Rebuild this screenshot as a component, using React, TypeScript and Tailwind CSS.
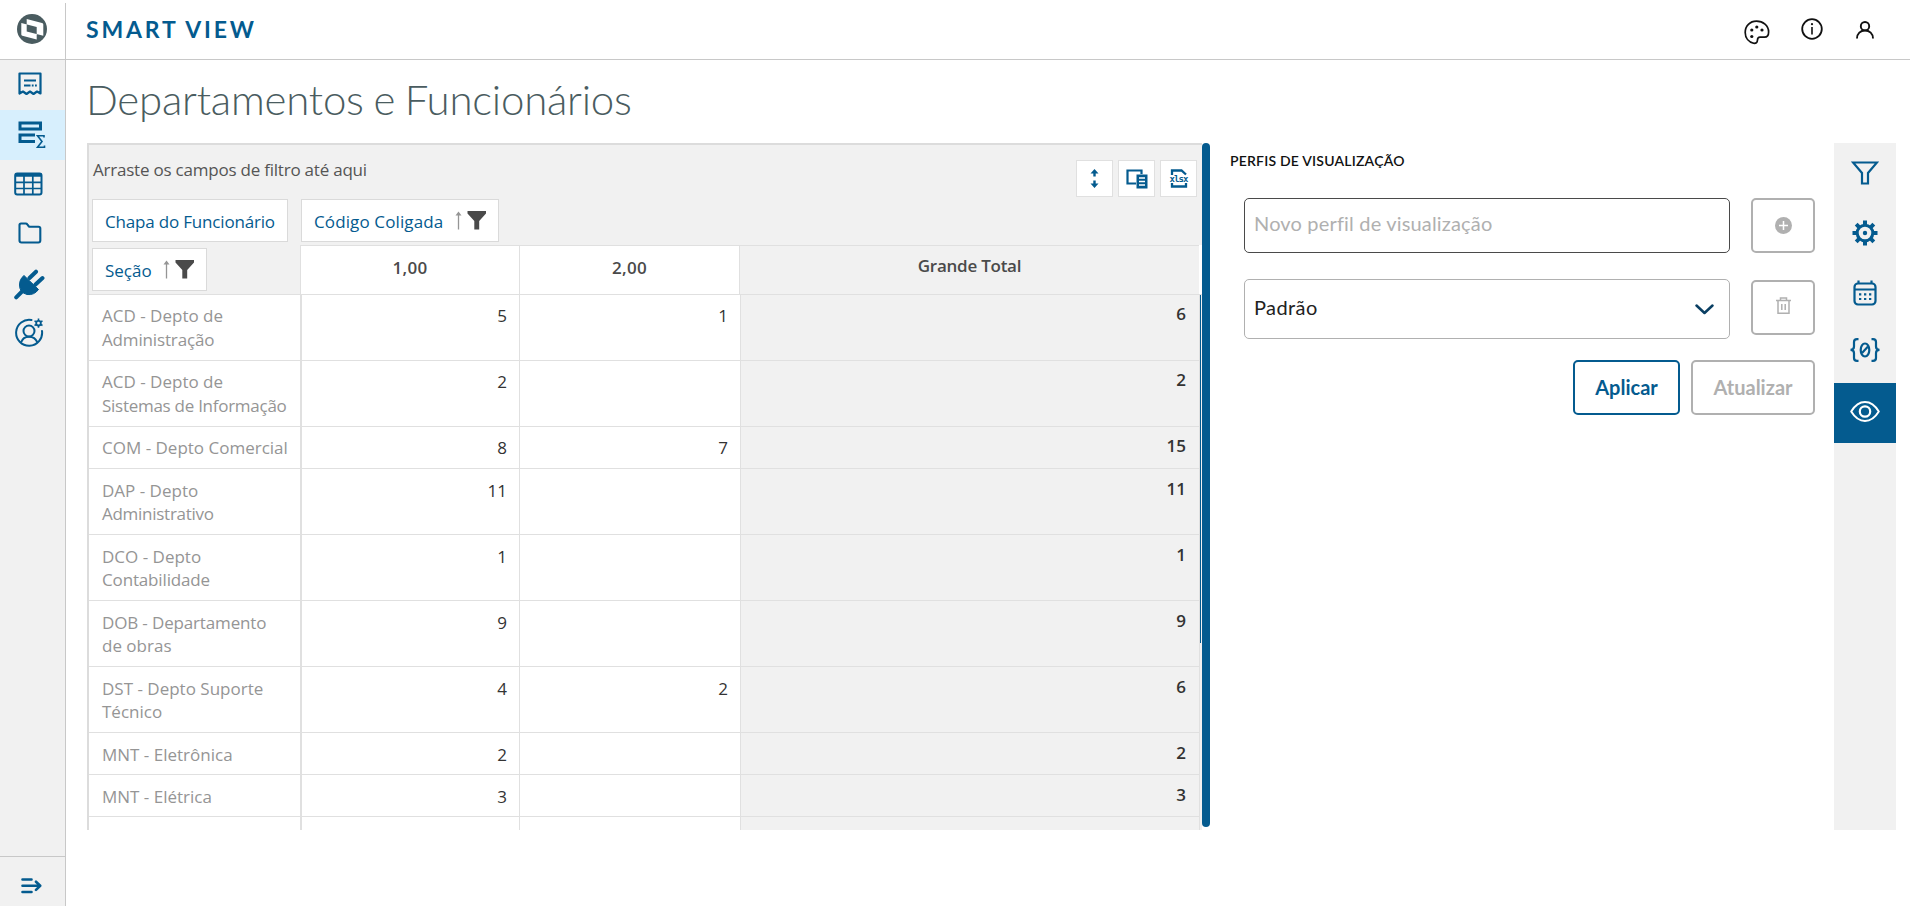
import React from 'react'

const BLUE = '#045b8f'

const rows: { name: string[]; a: string; b: string; total: string }[] = [
  { name: ['ACD - Depto de', 'Administração'], a: '5', b: '1', total: '6' },
  { name: ['ACD - Depto de', 'Sistemas de Informação'], a: '2', b: '', total: '2' },
  { name: ['COM - Depto Comercial'], a: '8', b: '7', total: '15' },
  { name: ['DAP - Depto', 'Administrativo'], a: '11', b: '', total: '11' },
  { name: ['DCO - Depto', 'Contabilidade'], a: '1', b: '', total: '1' },
  { name: ['DOB - Departamento', 'de obras'], a: '9', b: '', total: '9' },
  { name: ['DST - Depto Suporte', 'Técnico'], a: '4', b: '2', total: '6' },
  { name: ['MNT - Eletrônica'], a: '2', b: '', total: '2' },
  { name: ['MNT - Elétrica'], a: '3', b: '', total: '3' },
  { name: [''], a: '', b: '', total: '' },
]

function Logo() {
  return (
    <svg width="30" height="30" viewBox="0 0 30 30">
      <circle cx="15" cy="15" r="15" fill="#4a5c60" />
      <path
        d="M9.700 4.900 L25 8.900 Q26.300 9.300 26.300 10.500 V21.800 L9.700 17.400 Z M4.300 9 L19.700 13.100 V25.600 L5.300 21.800 Q4.300 21.500 4.300 20.500 Z"
        fill="#fff"
        fillRule="evenodd"
      />
    </svg>
  )
}

function ReportIcon() {
  return (
    <svg width="24" height="24" viewBox="0 0 24 24" fill="none" stroke={BLUE} strokeWidth="2.200">
      <path d="M1.500 21.500 V1.500 H22.500 V21.500 L19 19.500 L15.500 22 L12 19.500 L8.500 22 L5 19.500 Z" strokeLinejoin="round" />
      <path d="M6 8.500 H18 M6 13.500 H12.500 M13.800 13.500 H15.600 M17 13.500 H18.800" />
    </svg>
  )
}

function SumIcon() {
  return (
    <svg width="28" height="28" viewBox="0 0 28 28" fill="none" stroke={BLUE}>
      <path d="M2 2 H22.500 V8 H2 Z" strokeWidth="3" />
      <path d="M17 14 H2 V20.500 H17" strokeWidth="3" />
      <path d="M26 16.500 V14.700 H19.500 L24 20.500 L19.500 26.300 H26.500 V24.500" strokeWidth="1.600" />
    </svg>
  )
}

function TableIcon() {
  return (
    <svg width="29" height="24" viewBox="0 0 29 24" fill="none" stroke={BLUE}>
      <rect x="1.200" y="1.500" width="26.300" height="21" rx="2" strokeWidth="2" />
      <path d="M1 3 H27.500" strokeWidth="3.500" />
      <path d="M1 10.300 H27.500 M1 16.500 H27.500 M10 3 V22 M18.800 3 V22" strokeWidth="1.700" />
    </svg>
  )
}

function FolderIcon() {
  return (
    <svg width="24" height="22" viewBox="0 0 24 22" fill="none" stroke={BLUE} strokeWidth="2.100" strokeLinejoin="round">
      <path d="M1.500 3 Q1.500 1.500 3 1.500 H7.700 Q8.700 1.500 9.300 2.400 L11 4.700 H20.500 Q22.300 4.700 22.300 6.500 V18.500 Q22.300 20.500 20.300 20.500 H3.500 Q1.500 20.500 1.500 18.500 Z" />
    </svg>
  )
}

function PlugIcon() {
  return (
    <svg width="31" height="31" viewBox="0 0 31 31">
      <path d="M2.200 28.300 L9 21.500 M15.500 9 L22 2.700 M21.500 15.500 L28.500 9" stroke={BLUE} strokeWidth="4" strokeLinecap="round" />
      <path d="M10 6.500 L24.500 20.500 Q20 26.500 13 25.500 Q5.500 23.500 5.500 16 Q5.500 10 10 6.500 Z" fill={BLUE} stroke={BLUE} strokeLinejoin="round" />
    </svg>
  )
}

function UserGearIcon() {
  return (
    <svg width="29" height="29" viewBox="0 0 29 29" fill="none" stroke={BLUE} strokeWidth="2">
      <path d="M16.500 2 A13 13 0 1 0 27 13" strokeLinecap="round" />
      <circle cx="14" cy="13" r="5.500" />
      <path d="M6 24.500 Q8 18.700 14 18.700 Q20 18.700 22.500 24.500" />
      <circle cx="23.500" cy="5.200" r="2.300" strokeWidth="1.800" />
      <path d="M23.500 .6 V3 M23.500 7.500 V9.800 M19.500 2.900 L21.500 4 M25.500 6.400 L27.500 7.500 M19.500 7.500 L21.500 6.400 M25.500 4 L27.500 2.900" strokeWidth="1.600" />
    </svg>
  )
}

function ExpandIcon() {
  return (
    <svg width="21" height="16" viewBox="0 0 21 16" fill="none" stroke={BLUE} strokeWidth="2.600" strokeLinecap="round" strokeLinejoin="round">
      <path d="M1.500 1.500 H10.500 M1.500 14 H10.500 M1.500 7.800 H19 M15 3.700 L19.200 7.800 L15 11.900" />
    </svg>
  )
}

function PaletteIcon() {
  return (
    <svg width="26" height="25" viewBox="0 0 26 25" fill="none" stroke="#111" strokeWidth="1.700">
      <path d="M12.500 1.200 C19 1.200 24.600 5.500 24.600 12 C24.600 15.500 23 17.200 20.500 17.200 H16 C13.800 17.200 13.500 18.500 13.400 20.500 C13.300 22.500 12 23.700 9.500 23.200 C4.800 22 1.200 18 1.200 12.500 C1.200 6 6 1.200 12.500 1.200 Z" />
      <g fill="#111" stroke="none">
        <circle cx="7.800" cy="10" r="1.600" />
        <circle cx="12.800" cy="7" r="1.600" />
        <circle cx="18" cy="10" r="1.600" />
        <circle cx="7.800" cy="16.500" r="1.600" />
      </g>
    </svg>
  )
}

function InfoIcon() {
  return (
    <svg width="22" height="22" viewBox="0 0 22 22" fill="none" stroke="#111">
      <circle cx="11" cy="11" r="9.800" strokeWidth="1.800" />
      <path d="M11 9 V16.500" strokeWidth="1.600" />
      <circle cx="11" cy="6.200" r="1.100" fill="#111" stroke="none" />
    </svg>
  )
}

function UserIcon() {
  return (
    <svg width="18" height="18" viewBox="0 0 18 18" fill="none" stroke="#111" strokeWidth="1.900">
      <circle cx="9" cy="5.200" r="4.200" />
      <path d="M1 17.500 C1 12.500 4.500 9.500 9 9.500 C13.500 9.500 17 12.500 17 17.500" />
    </svg>
  )
}

function SortFilter() {
  return (
    <svg width="31" height="19" viewBox="0 0 31 19">
      <path d="M3.500 18.500 V2" stroke="#959595" strokeWidth="1.300" />
      <path d="M.5 4.500 L3.500 .5 L6.500 4.500 Z" fill="#959595" />
      <path d="M12.500 0 H31 V2.500 L24.200 10 V18.500 H19.300 V10 L12.500 2.500 Z" fill="#4a4a4a" />
    </svg>
  )
}

function ToolButton({ children }: { children: React.ReactNode }) {
  return <div className="flex h-[37px] w-[37px] items-center justify-center border border-[#e0e0e0] bg-white">{children}</div>
}

function Braces() {
  return (
    <svg width="32" height="24" viewBox="0 0 32 24" fill="none" stroke={BLUE} strokeWidth="2.200">
      <path d="M9.500 1.200 H8 Q5 1.200 5 4 V8.500 Q5 11.800 1.500 11.800 Q5 11.800 5 15 V20 Q5 22.800 8 22.800 H9.500" />
      <path d="M22.500 1.200 H24 Q27 1.200 27 4 V8.500 Q27 11.800 30.500 11.800 Q27 11.800 27 15 V20 Q27 22.800 24 22.800 H22.500" />
      <ellipse cx="16" cy="12" rx="4.300" ry="6.500" />
      <path d="M13 15 L19 8.500" />
    </svg>
  )
}

function GearIcon() {
  return (
    <svg width="26" height="26" viewBox="0 0 26 26" fill="none" stroke={BLUE}>
      <circle cx="13" cy="13" r="7.800" strokeWidth="3" />
      <path
        d="M13 .5 V5 M13 21 V25.500 M.5 13 H5 M21 13 H25.500 M4.200 4.200 L7.300 7.300 M18.700 18.700 L21.800 21.800 M4.200 21.800 L7.300 18.700 M18.700 7.300 L21.800 4.200"
        strokeWidth="4"
      />
      <circle cx="13" cy="13" r="2.200" fill={BLUE} stroke="none" />
    </svg>
  )
}

function CalendarIcon() {
  return (
    <svg width="24" height="26" viewBox="0 0 24 26" fill="none" stroke={BLUE} strokeWidth="2.200">
      <rect x="1.500" y="3.500" width="21" height="21" rx="3.500" />
      <path d="M1.500 9.500 H22.500 M5.500 .5 V4 M18.500 .5 V4" />
      <path d="M6 14.300 H8.300 M11 14.300 H13.300 M16 14.300 H18.300 M6 19 H8.300 M11 19 H13.300 M16 19 H18.300" />
    </svg>
  )
}

function EyeIcon() {
  return (
    <svg width="30" height="21" viewBox="0 0 30 21" fill="none" stroke="#fff" strokeWidth="2">
      <path d="M1.200 10.500 Q7 1 15 1 Q23 1 28.800 10.500 Q23 20 15 20 Q7 20 1.200 10.500 Z" strokeLinejoin="round" />
      <circle cx="15" cy="10.500" r="5.200" strokeWidth="2.200" />
    </svg>
  )
}

export default function App() {
  return (
    <div className="flex h-[906px] w-[1910px] flex-col overflow-hidden bg-white font-['Open_Sans','Noto_Sans',sans-serif]">
      <header className="flex h-[60px] shrink-0 border-b border-[#c8c8c8]">
        <div className="mt-[3px] w-[66px] border-r border-[#c8c8c8] pt-[11px] pl-[17px]">
          <Logo />
        </div>
        <div className="flex flex-1 items-center justify-between pr-[36px] pl-[20px]">
          <span className="font-['Lato',sans-serif] text-[23px] font-bold tracking-[2.800px] text-[#045b8f]">SMART VIEW</span>
          <div className="flex items-center">
            <div className="mt-[6px] mr-[31px]"><PaletteIcon /></div>
            <div className="mt-[-2px] mr-[33px]"><InfoIcon /></div>
            <UserIcon />
          </div>
        </div>
      </header>

      <div className="flex min-h-0 flex-1">
        <nav className="flex w-[66px] shrink-0 flex-col border-r border-[#c8c8c8] bg-[#f1f1f1]">
          <div className="flex h-[50px] items-center pb-[3px] pl-[18px]"><ReportIcon /></div>
          <div className="flex h-[50px] items-center bg-[#d7effd] pl-[18px]"><SumIcon /></div>
          <div className="flex h-[49px] items-center pb-[2px] pl-[14px]"><TableIcon /></div>
          <div className="flex h-[49px] items-center pb-[2px] pl-[18px]"><FolderIcon /></div>
          <div className="flex h-[50px] items-center pt-[2px] pl-[14px]"><PlugIcon /></div>
          <div className="flex h-[50px] items-center pb-[2px] pl-[15px]"><UserGearIcon /></div>
          <div className="mt-auto flex h-[50px] items-center border-t border-[#c8c8c8] pt-[9px] pl-[21px]"><ExpandIcon /></div>
        </nav>

        <main className="flex min-w-0 flex-1 flex-col pl-[21px]">
          <h1 className="flex h-[83px] items-center pb-[4px] font-['Lato',sans-serif] text-[42px] font-light text-[#4a5c60]">
            <span className="-ml-px tracking-[-0.230px] [word-spacing:-1.500px] whitespace-nowrap">Departamentos e Funcionários</span>
          </h1>
          <div className="flex h-[687px]">
            <section className="flex w-[1115px] flex-col overflow-hidden border-t-2 border-l-2 border-[#dcdcdc] bg-[#f1f1f1]">
              <div className="flex h-[54px] justify-between pr-[5px] pl-[4px]">
                <span className="mt-[13px] self-start text-[17px] leading-6 tracking-[-0.220px] whitespace-nowrap text-[#555]">Arraste os campos de filtro até aqui</span>
                <div className="mt-[15px] flex gap-[5px]">
                  <ToolButton>
                    <svg width="9" height="19" viewBox="0 0 9 19" fill={BLUE}>
                      <path d="M4.500 0 L8.500 4.500 H5.700 V7.500 H3.300 V4.500 H.5 Z M4.500 19 L8.500 14.500 H5.700 V11.500 H3.300 V14.500 H.5 Z" />
                    </svg>
                  </ToolButton>
                  <ToolButton>
                    <svg width="22" height="20" viewBox="0 0 22 20" fill="none" stroke={BLUE}>
                      <path d="M15.500 5 V1.500 H1.500 V14.500 H10" strokeWidth="2.200" />
                      <path d="M10.500 5.500 H21.500 V19.500 H10.500 Z" fill={BLUE} stroke="none" />
                      <path d="M13 9 H19 M13 12.500 H19 M13 16 H19" stroke="#fff" strokeWidth="1.400" />
                    </svg>
                  </ToolButton>
                  <ToolButton>
                    <svg width="20" height="19" viewBox="0 0 20 19" fill="none" stroke={BLUE} strokeWidth="2.300">
                      <path d="M3 6 V1.500 H12.500 L17 5.500 M3 14 V17.500 H17 V14" />
                      <text x="10" y="12.700" textAnchor="middle" textLength="19" fontSize="9" fontWeight="700" fontFamily="DejaVu Sans Mono" fill={BLUE} stroke="none">xlsx</text>
                    </svg>
                  </ToolButton>
                </div>
              </div>

              <div className="flex h-[46px] pl-[3px] text-[17px] text-[#045b8f]">
                <div className="flex h-[43px] w-[196px] items-center border border-[#dadada] bg-white pt-[2px] pl-[12px]">
                  <span className="tracking-[-0.180px] whitespace-nowrap">Chapa do Funcionário</span>
                </div>
                <div className="ml-[13px] flex h-[43px] w-[198px] items-center border border-[#dadada] bg-white pt-[2px] pr-[12px] pl-[12px]">
                  <span className="tracking-[0.120px] whitespace-nowrap">Código Coligada</span>
                  <div className="mb-[3px] ml-auto"><SortFilter /></div>
                </div>
              </div>

              <div className="flex h-[50px] border-b border-[#e0e0e0]">
                <div className="flex w-[211px] pt-[3px] pl-[3px]">
                  <div className="flex h-[43px] w-[115px] items-center border border-[#dadada] bg-white pt-[2px] pr-[12px] pl-[12px] text-[17px] text-[#045b8f]">
                    <span className="whitespace-nowrap">Seção</span>
                    <div className="mb-[3px] ml-auto"><SortFilter /></div>
                  </div>
                </div>
                <div className="flex w-[220px] justify-center border-t border-r border-l border-[#e0e0e0] bg-white pt-[10px] text-[17px] leading-6 font-semibold tracking-[0.300px] text-[#4a4a4a]">1,00</div>
                <div className="flex w-[220px] justify-center border-t border-r border-[#e0e0e0] bg-white pt-[10px] text-[17px] leading-6 font-semibold tracking-[0.300px] text-[#4a4a4a]">2,00</div>
                <div className="flex w-[459px] justify-center border-t border-[#e0e0e0] pt-[8px] text-[17px] leading-6 font-semibold text-[#4a4a4a]">
                  <span className="tracking-[-0.250px] whitespace-nowrap">Grande Total</span>
                </div>
                <div className="w-[3px] bg-white" />
              </div>

              <div className="flex min-h-0 flex-1">
                <div className="w-[1111px] shrink-0">
                  {rows.map((r, i) => {
                    const pad = i < 3 ? 'pt-[9px] leading-6' : 'pt-[10px] leading-[23px]'
                    const totalPad = i < 3 ? 'pt-[7px] leading-6' : 'pt-[8px] leading-[23px]'
                    return (
                      <div key={i} className={r.name.length > 1 ? 'flex h-[66px] text-[17px]' : 'flex h-[42px] text-[17px]'}>
                        <div className={`w-[213px] border-r-2 border-b border-[#e0e0e0] bg-white pl-[13px] text-[#959595] ${pad}`}>
                          {r.name.map((n, k) => (
                            <div
                              key={k}
                              className={
                                n.startsWith('Sistemas') || n === 'Administrativo'
                                  ? 'tracking-[-0.270px] whitespace-nowrap'
                                  : n.startsWith('DOB') || n === 'Contabilidade' || n === 'Administração'
                                    ? 'tracking-[-0.150px] whitespace-nowrap'
                                    : 'whitespace-nowrap'
                              }
                            >
                              {n}
                            </div>
                          ))}
                        </div>
                        <div className={`w-[218px] border-r border-b border-[#e0e0e0] bg-white pr-[12px] text-right text-[#333] ${pad}`}>{r.a}</div>
                        <div className={`w-[221px] border-r border-b border-[#e0e0e0] bg-white pr-[12px] text-right text-[#333] ${pad}`}>{r.b}</div>
                        <div className={`w-[459px] border-r border-b border-[#e0e0e0] pr-[13px] text-right font-semibold text-[#333] ${totalPad}`}>{r.total}</div>
                      </div>
                    )
                  })}
                </div>
                <div className="h-[348px] w-px bg-[#045b8f]" />
              </div>
            </section>
            <div className="h-[684px] w-[8px] rounded-full bg-[#045b8f]" />

            <section className="flex w-[605px] flex-col pl-[20px] font-['Lato',sans-serif]">
              <h2 className="mt-[9px] text-[14px] leading-[18px] font-semibold text-[#111]">
                <span className="tracking-[0.200px] whitespace-nowrap">PERFIS DE VISUALIZAÇÃO</span>
              </h2>
              <div className="mt-[28px] ml-[14px] flex gap-[21px]">
                <div className="flex h-[55px] w-[486px] items-center rounded-[5px] border border-[#4a4a4a] pb-[5px] pl-[9px] text-[20px] text-[#b0b0b0]">
                  <span className="tracking-[0.170px] whitespace-nowrap">Novo perfil de visualização</span>
                </div>
                <div className="flex h-[55px] w-[64px] items-center justify-center rounded-[5px] border-2 border-[#b0b0b0] pb-px">
                  <svg width="17" height="17" viewBox="0 0 17 17">
                    <circle cx="8.500" cy="8.500" r="8.500" fill="#b0b0b0" />
                    <path d="M8.500 4 V13 M4 8.500 H13" stroke="#fff" strokeWidth="1.500" />
                  </svg>
                </div>
              </div>
              <div className="mt-[26px] ml-[14px] flex items-start gap-[21px]">
                <div className="flex h-[60px] w-[486px] items-center justify-between rounded-[5px] border border-[#b0b0b0] pr-[15px] pl-[9px] text-[20px] text-[#222]">
                  <span className="pb-[4px] tracking-[0.400px] whitespace-nowrap">Padrão</span>
                  <svg width="19" height="11" viewBox="0 0 19 11" fill="none" stroke="#0a3f63" strokeWidth="2.500" strokeLinecap="round" strokeLinejoin="round">
                    <path d="M1.500 1.500 L9.500 9 L17.500 1.500" />
                  </svg>
                </div>
                <div className="mt-px flex h-[55px] w-[64px] items-center justify-center rounded-[5px] border-2 border-[#b0b0b0] pb-[4px]">
                  <svg width="15" height="17" viewBox="0 0 15 17" fill="none" stroke="#b0b0b0" strokeWidth="1.500">
                    <path d="M0 3.500 H15 M4.500 3.500 V1 H10.500 V3.500 M2 3.500 V16.200 H13 V3.500 M5.800 7 V13 M9.200 7 V13" />
                  </svg>
                </div>
              </div>
              <div className="mt-[21px] flex gap-[11px] pl-[343px] text-[20px] font-bold">
                <div className="flex h-[55px] w-[107px] items-center justify-center rounded-[5px] border-2 border-[#045b8f] pb-[2px] text-[#045b8f]">Aplicar</div>
                <div className="flex h-[55px] w-[124px] items-center justify-center rounded-[5px] border-2 border-[#b0b0b0] pb-[2px] text-[#b0b0b0]">Atualizar</div>
              </div>
            </section>

            <aside className="ml-[19px] flex w-[62px] flex-col bg-[#f1f1f1]">
              <div className="flex h-[60px] items-center justify-center">
                <svg width="28" height="24" viewBox="0 0 28 24" fill="none" stroke={BLUE} strokeWidth="2.200">
                  <path d="M2 1.500 H26 L17 12 V22.500 H11 V12 Z" />
                </svg>
              </div>
              <div className="flex h-[60px] items-center justify-center"><GearIcon /></div>
              <div className="flex h-[60px] items-center justify-center"><CalendarIcon /></div>
              <div className="flex h-[60px] items-center justify-center pb-[6px]"><Braces /></div>
              <div className="flex h-[60px] items-center justify-center bg-[#045b8f] pb-[4px]"><EyeIcon /></div>
            </aside>
          </div>
        </main>
      </div>
    </div>
  )
}
